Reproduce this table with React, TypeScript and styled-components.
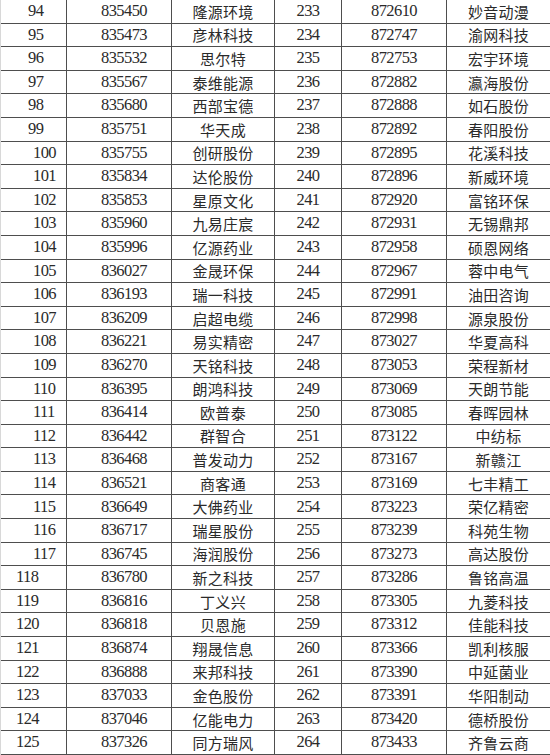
import styled, { createGlobalStyle } from "styled-components";

const GlobalStyle = createGlobalStyle`
  html, body {
    margin: 0;
    padding: 0;
    background: #fff;
  }
`;

type Row = [string, string, string];

const LEFT: Row[] = [
  ["94", "835450", "隆源环境"],
  ["95", "835473", "彦林科技"],
  ["96", "835532", "思尔特"],
  ["97", "835567", "泰维能源"],
  ["98", "835680", "西部宝德"],
  ["99", "835751", "华天成"],
  ["100", "835755", "创研股份"],
  ["101", "835834", "达伦股份"],
  ["102", "835853", "星原文化"],
  ["103", "835960", "九易庄宸"],
  ["104", "835996", "亿源药业"],
  ["105", "836027", "金晟环保"],
  ["106", "836193", "瑞一科技"],
  ["107", "836209", "启超电缆"],
  ["108", "836221", "易实精密"],
  ["109", "836270", "天铭科技"],
  ["110", "836395", "朗鸿科技"],
  ["111", "836414", "欧普泰"],
  ["112", "836442", "群智合"],
  ["113", "836468", "普发动力"],
  ["114", "836521", "商客通"],
  ["115", "836649", "大佛药业"],
  ["116", "836717", "瑞星股份"],
  ["117", "836745", "海润股份"],
  ["118", "836780", "新之科技"],
  ["119", "836816", "丁义兴"],
  ["120", "836818", "贝恩施"],
  ["121", "836874", "翔晟信息"],
  ["122", "836888", "来邦科技"],
  ["123", "837033", "金色股份"],
  ["124", "837046", "亿能电力"],
  ["125", "837326", "同方瑞风"],
];

const RIGHT: Row[] = [
  ["233", "872610", "妙音动漫"],
  ["234", "872747", "渝网科技"],
  ["235", "872753", "宏宇环境"],
  ["236", "872882", "瀛海股份"],
  ["237", "872888", "如石股份"],
  ["238", "872892", "春阳股份"],
  ["239", "872895", "花溪科技"],
  ["240", "872896", "新威环境"],
  ["241", "872920", "富铭环保"],
  ["242", "872931", "无锡鼎邦"],
  ["243", "872958", "硕恩网络"],
  ["244", "872967", "蓉中电气"],
  ["245", "872991", "油田咨询"],
  ["246", "872998", "源泉股份"],
  ["247", "873027", "华夏高科"],
  ["248", "873053", "荣程新材"],
  ["249", "873069", "天朗节能"],
  ["250", "873085", "春晖园林"],
  ["251", "873122", "中纺标"],
  ["252", "873167", "新赣江"],
  ["253", "873169", "七丰精工"],
  ["254", "873223", "荣亿精密"],
  ["255", "873239", "科苑生物"],
  ["256", "873273", "高达股份"],
  ["257", "873286", "鲁铭高温"],
  ["258", "873305", "九菱科技"],
  ["259", "873312", "佳能科技"],
  ["260", "873366", "凯利核服"],
  ["261", "873390", "中延菌业"],
  ["262", "873391", "华阳制动"],
  ["263", "873420", "德桥股份"],
  ["264", "873433", "齐鲁云商"],
];

const Sheet = styled.div`
  width: 550px;
  height: 755px;
  display: grid;
  grid-template-rows: repeat(32, 1fr);
  background: #fff;
  color: #2a2a2a;
  overflow: hidden;
  border-left: 1px solid #d8d8d8;
  box-sizing: border-box;
`;

const Line = styled.div`
  display: grid;
  grid-template-columns: 66px 105px 103px 67px 105px 1fr;
  border-bottom: 1px solid #4e4e4e;
  min-height: 0;
`;

const Cell = styled.div<{ $cjk?: boolean; $pad?: string; $left?: boolean }>`
  display: flex;
  align-items: center;
  justify-content: ${({ $left }) => ($left ? "flex-start" : "center")};
  padding: ${({ $pad }) => $pad || "0"};
  border-right: 1px solid #4e4e4e;
  font-family: ${({ $cjk }) =>
    $cjk
      ? `"Noto Sans CJK SC", sans-serif`
      : `"Liberation Serif", "DejaVu Serif", serif`};
  font-size: ${({ $cjk }) => ($cjk ? "15px" : "16.5px")};
  letter-spacing: ${({ $cjk }) => ($cjk ? "0.3px" : "-0.6px")};
  line-height: 1;
  white-space: nowrap;
  &:last-child {
    border-right: none;
  }
`;

// first column alignment drifts in the source sheet
const indexPad = (n: number) => {
  if (n >= 118) return "0 0 0 15px";
  if (n >= 100) return "0 0 0 32px";
  return "0 0 0 27px";
};

export default function App() {
  return (
    <>
      <GlobalStyle />
      <Sheet>
        {LEFT.map((l, i) => {
          const r = RIGHT[i];
          const n = Number(l[0]);
          return (
            <Line key={l[0]}>
              <Cell $left $pad={indexPad(n)}>{l[0]}</Cell>
              <Cell $pad="0 0 0 10px">{l[1]}</Cell>
              <Cell $cjk>{l[2]}</Cell>
              <Cell>{r[0]}</Cell>
              <Cell>{r[1]}</Cell>
              <Cell $cjk>{r[2]}</Cell>
            </Line>
          );
        })}
      </Sheet>
    </>
  );
}
